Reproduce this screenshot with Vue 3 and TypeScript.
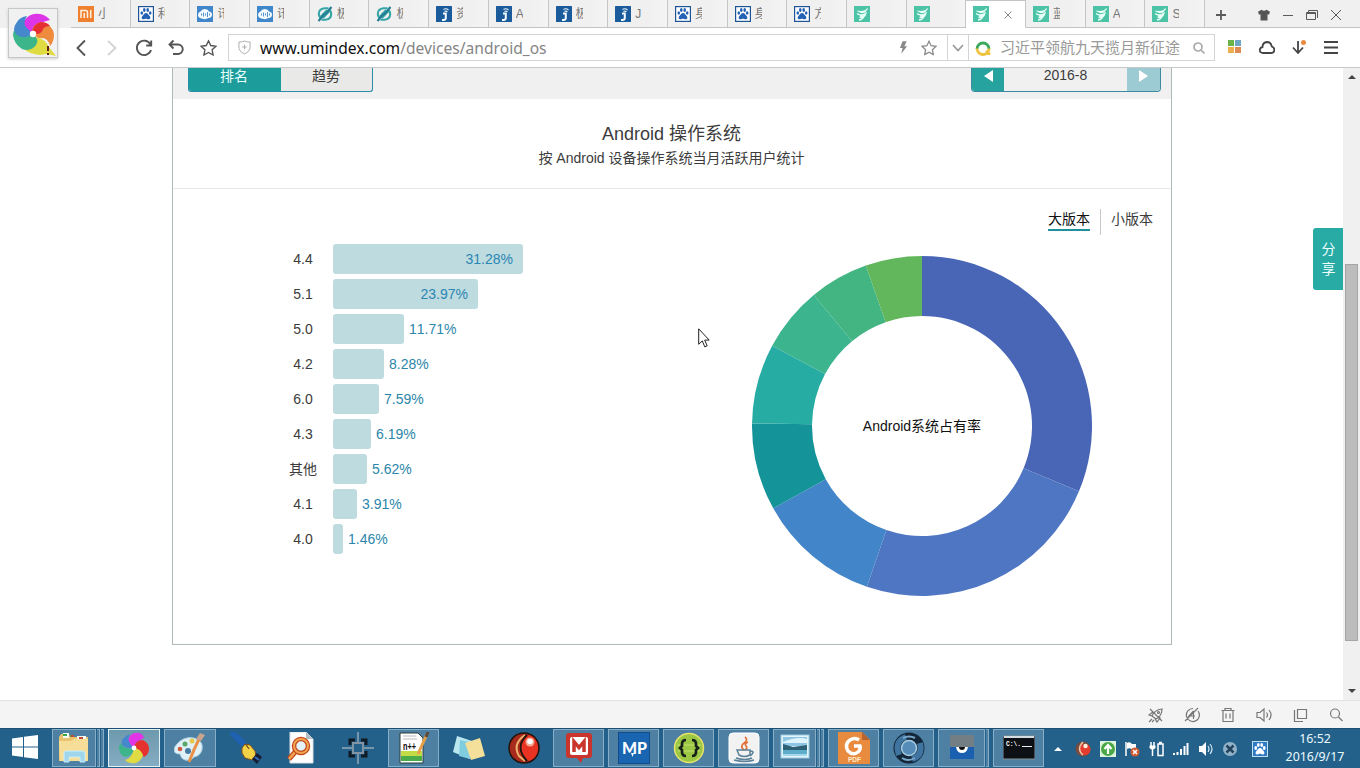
<script setup lang="ts">
interface Tab { icon: string; label: string; active?: boolean }
interface Bar { name: string; share: number; width: number; inside?: boolean }
interface Caption { text: string; x: number; y: number; size: number; length: number; color: string; family: string }
interface TaskItem { icon: string; width: number; state?: 'open' | 'active'; layers?: number; caption?: Caption }

const tabs: Tab[] = [
  { icon: 'mi', label: '小' },
  { icon: 'paw', label: '利' },
  { icon: 'voice', label: '讯' },
  { icon: 'voice', label: '讯' },
  { icon: 'loop', label: '极' },
  { icon: 'loop', label: '极' },
  { icon: 'jay', label: '资' },
  { icon: 'jay', label: 'A' },
  { icon: 'jay', label: '极' },
  { icon: 'jay', label: 'J' },
  { icon: 'paw', label: '身' },
  { icon: 'paw', label: '身' },
  { icon: 'paw', label: '方' },
  { icon: 'leaf', label: '' },
  { icon: 'leaf', label: '' },
  { icon: 'leaf', label: '', active: true },
  { icon: 'leaf', label: '蓝' },
  { icon: 'leaf', label: 'A' },
  { icon: 'leaf', label: 'S' },
]

const bars: Bar[] = [
  { name: '4.4', share: 31.28, width: 190, inside: true },
  { name: '5.1', share: 23.97, width: 145, inside: true },
  { name: '5.0', share: 11.71, width: 71 },
  { name: '4.2', share: 8.28, width: 51 },
  { name: '6.0', share: 7.59, width: 46 },
  { name: '4.3', share: 6.19, width: 38 },
  { name: '其他', share: 5.62, width: 34 },
  { name: '4.1', share: 3.91, width: 24 },
  { name: '4.0', share: 1.46, width: 10 },
]

const shares = [31.28, 23.97, 11.71, 8.28, 7.59, 6.19, 5.62, 5.36]
const colors = ['#4966b6', '#4f76c3', '#4385c9', '#149398', '#27aca4', '#3cb48e', '#42b583', '#62b65b']

function point(radius: number, pct: number): string {
  const a = (pct / 100) * Math.PI * 2
  return `${(170 + radius * Math.sin(a)).toFixed(2)} ${(170 - radius * Math.cos(a)).toFixed(2)}`
}

let total = 0
const slices = shares.map((share, i) => {
  const from = total
  total += share
  const to = total
  return {
    color: colors[i],
    d: `M${point(170, from)}A170 170 0 0 1 ${point(170, to)}L${point(110, to)}A110 110 0 0 0 ${point(110, from)}Z`,
  }
})

const tasks: TaskItem[] = [
  { icon: 'folder', width: 52, state: 'open', layers: 2 },
  { icon: 'swirl', width: 52, state: 'active' },
  { icon: 'palette', width: 52, state: 'open' },
  { icon: 'hand', width: 52 },
  { icon: 'search-doc', width: 51 },
  { icon: 'crosshair', width: 53 },
  { icon: 'notepad', width: 51, state: 'open', caption: { text: 'n++', x: 5, y: 18, size: 11, length: 13, color: '#111', family: 'sans' } },
  { icon: 'sticky', width: 51 },
  { icon: 'ball', width: 51 },
  { icon: 'emm', width: 51, state: 'open' },
  { icon: 'mp', width: 51, state: 'open', caption: { text: 'MP', x: 4, y: 21.5, size: 16, length: 25, color: '#fff', family: 'heavy' } },
  { icon: 'braces', width: 51, state: 'open' },
  { icon: 'java', width: 51, state: 'open' },
  { icon: 'picture', width: 51, state: 'open', layers: 2 },
  { icon: 'pdf', width: 51, state: 'open', caption: { text: 'PDF', x: 10, y: 29.5, size: 7.5, length: 13, color: '#fff0d2', family: 'sans' } },
  { icon: 'ring', width: 51, state: 'open' },
  { icon: 'eye', width: 51, state: 'open', layers: 1 },
  { icon: 'cmd', width: 51, state: 'open', caption: { text: 'C:\\.', x: 3, y: 14, size: 8, length: 15, color: '#fff', family: 'mono' } },
]

const tray = ['t-ball', 't-up', 't-flag', 't-power', 't-signal', 't-sound', 't-x']
const statusIcons = ['s-rocket', 's-speed', 's-trash', 's-sound', 's-window', 's-search']
</script>

<template>
  <div class="screen">
    <svg class="defs" aria-hidden="true">
      <symbol id="mi" viewBox="0 0 16 16"><rect width="16" height="16" fill="#ee8030" /><path d="M3 12V4.500h4.500q2 0 2 2V12M6.200 7v5M12.700 4v8" fill="none" stroke="#fff3e2" stroke-width="1.500" /></symbol>
      <symbol id="paw" viewBox="0 0 16 16"><rect x=".6" y=".6" width="14.800" height="14.800" fill="#fff" stroke="#1c5494" stroke-width="1.200" /><g fill="#2462b4"><ellipse cx="3.800" cy="7" rx="1.300" ry="1.800" /><ellipse cx="6.300" cy="4" rx="1.300" ry="1.900" /><ellipse cx="9.700" cy="4" rx="1.300" ry="1.900" /><ellipse cx="12.200" cy="7" rx="1.300" ry="1.800" /><path d="M8 7c2 0 2.300 2 3.600 3s1 3.300-.8 3.300S9 12.800 8 12.800s-1.300.5-2.900.5-2-2.300-.7-3.300S6.200 7 8 7z" /></g></symbol>
      <symbol id="t-paw" viewBox="0 0 16 16"><rect x=".5" y=".5" width="15" height="15" fill="#2f7ac2" stroke="#bfe0f5" /><g fill="#fff"><ellipse cx="3.800" cy="7" rx="1.400" ry="1.900" /><ellipse cx="6.300" cy="4" rx="1.400" ry="1.900" /><ellipse cx="9.700" cy="4" rx="1.400" ry="1.900" /><ellipse cx="12.200" cy="7" rx="1.400" ry="1.900" /><path d="M8 7c2 0 2.300 2 3.600 3s1 3.500-.8 3.500S9 12.800 8 12.800s-1.300.7-2.900.7-2-2.500-.7-3.500S6.200 7 8 7z" /></g></symbol>
      <symbol id="voice" viewBox="0 0 16 16"><rect width="16" height="16" fill="#3f86cb" /><path d="M4.500 12.500Q1 12 1 8.800q0-2.500 2.500-3.200Q5 2.800 8 3q3 0 4 2.500 3 .5 3 3.300 0 3-3.500 3.200L8 13.300z" fill="#f4fbff" /><path d="M4.500 7.500v2M6.500 6.500v4M8.500 7.500v2M10.500 6v5M12.500 7.500v2" stroke="#3f86cb" stroke-width=".9" /></symbol>
      <symbol id="loop" viewBox="0 0 16 16"><path d="M11.500 2.300H7.500Q1.800 3 1.800 8q0 2.200 1.300 3.500L10 4.300M4.500 13.700h4q5.700-.7 5.700-5.700 0-2.200-1.300-3.500L6 11.700" fill="none" stroke="#35a5a5" stroke-width="2.100" /><path d="M14.500 1 8 8.500M8 7.500 1.500 15" stroke="#247f96" stroke-width="2.200" /></symbol>
      <symbol id="jay" viewBox="0 0 16 16"><rect width="16" height="16" rx=".5" fill="#1c5b9b" /><path d="M7 7.500h2.800v4.300q0 2.200-2.300 2.200H6" fill="none" stroke="#f3faff" stroke-width="2" /><path d="M7.500 3.500q2.500-1.800 5 .5M8.500 5.500q1.500-1 3 .3" fill="none" stroke="#e4f1fa" stroke-width="1.100" /></symbol>
      <symbol id="leaf" viewBox="0 0 16 16"><rect width="16" height="16" fill="#4cc3a7" /><path d="M13.500 2.500Q12 6 5 5.500 8 7.500 12 5.500M3 7.500q4 3 9-.3Q11 11 6 9.700M5.500 11.500q4 0 6-2.500M5 14Q9.500 13.500 10.500 9" fill="none" stroke="#eafff8" stroke-width="1.300" /></symbol>

      <symbol id="swirl" viewBox="0 0 32 32">
        <path d="M16 16C11 16 7 11 12 4q3-4 9-3 4 1 5 5-3 1-5 3-4 1-5 7z" fill="#e233e6" />
        <path d="M16 16q1-8 9-8 6 3 6 9 0 5-5 8-2-3-5-4-3-1-5-5z" fill="#e5322e" />
        <path d="M16 16q7 1 9 7-1 5-7 8-7 1-11-3 4-1 6-4 2-3 3-8z" fill="#dfdb42" />
        <path d="M16 16q-1 8-9 9-5-2-6-8 0-4 2-6 2 5 6 5 4 1 7 0z" fill="#3cb58b" />
        <path d="M16 16q-7 1-11-2-4-5 3-10l4-2q-3 6 0 9 1 3 4 5z" fill="#4688cc" />
        <circle cx="16" cy="16" r="2.400" fill="#fff" />
      </symbol>
      <symbol id="logo" viewBox="0 0 44 44">
        <path d="M21 22Q9 21 12 9q6-9 16-7 6 1 10 6-8 2-11 4-5 3-6 10z" fill="#dd34e7" />
        <path d="M20 21q0-9 9-11 11 2 13 12 0 8-4 12-2-8-8-8-6 1-10-5z" fill="#ee8b3d" /><path d="M20 21q1-9 9-11 6 0 9 4-5 0-7 3-1 4-5 5z" fill="#e62f31" />
        <path d="M17 25q12 0 14 3 3 1 6 7l7 9-9-2-7 1q-10-1-15-5 6-3 4-13z" fill="#dfdb42" />
        <path d="M21 22q7 6 3 11-5 7-14 4-8-5-9-14 0-5 4-7 4 6 9 7z" fill="#3cb58b" />
        <path d="M21 22q-8 6-16 1-6-5 0-13 3-5 10-6-5 8 0 12z" fill="#4688cc" />
        <circle cx="21" cy="22" r="3.200" fill="#fff" /><path d="M36 34v5M36 41v2" stroke="#631f1b" stroke-width="2" />
      </symbol>
      <symbol id="folder" viewBox="0 0 32 32"><path d="M1 5 3 2h8l1 3h18v24H1z" fill="#e9c36f" /><path d="M5 1h6v5H5zM19 4h9v5h-9z" fill="#f8fbf5" /><path d="M5 3h4M12 4h3" stroke="#39a64e" stroke-width="2" /><path d="M13 4h3M21 6h4" stroke="#c34a3b" stroke-width="2" /><path d="M1 9h12l3-2h14v22H2z" fill="#f7de98" /><path d="M6 30v-9q0-2 2-2h17q2 0 2 2v9h-5v-5H11v5z" fill="#9fd6ec" stroke="#c9effb" /></symbol>
      <symbol id="palette" viewBox="0 0 32 32"><path d="M3 12Q10 4 20 6q10 3 8 12-2 6-8 7-3 4-9 3-4-1-5-6-6 0-6-4 0-3 3-6z" fill="#dff0f7" stroke="#a9cddf" /><circle cx="11" cy="12" r="2.500" fill="#58a869" /><circle cx="18" cy="9" r="2.500" fill="#e5c84a" /><circle cx="6" cy="17" r="2.300" fill="#d05a3d" /><circle cx="14" cy="19" r="3" fill="#457aa3" /><path d="M15 30Q20 17 25 7" stroke="#e99048" stroke-width="3" /><path d="m22 7 4-6 5 2-4 6z" fill="#c9a48b" /></symbol>
      <symbol id="hand" viewBox="0 0 32 32"><path d="m1 0 12 14M5 2l10 10" stroke="#1f61b3" stroke-width="4" /><path d="m12 16 3-4 4 5-3-5 4 1 5 6 1 5-4 4-7-2-3-5z" fill="#f2d348" stroke="#80501c" /><path d="m22 27 5-6 5 4-5 7z" fill="#171e33" /><path d="m25 25 4 3" stroke="#2d6fc0" stroke-width="2" /></symbol>
      <symbol id="search-doc" viewBox="0 0 32 32"><path d="M4 0h16l7 7v24H4z" fill="#fff" stroke="#d8dfe1" /><path d="M20 0v7h7z" fill="#b2bec5" /><path d="m3 27 7-8" stroke="#c4481d" stroke-width="5" /><path d="m3 27 7-8" stroke="#f1a451" stroke-width="2.500" /><circle cx="15" cy="14" r="7" fill="#e4f3fa" stroke="#c4481d" stroke-width="4.500" /><circle cx="15" cy="14" r="7" fill="none" stroke="#f1a451" stroke-width="2" /></symbol>
      <symbol id="crosshair" viewBox="0 0 32 32"><path d="M16 0v10M16 22v10M0 16h10M22 16h10" stroke="#93a8b8" stroke-width="1.500" /><rect x="11" y="11" width="10" height="10" fill="none" stroke="#8094a5" stroke-width="2" /><path d="M8 13V8h5M19 8h5v5M24 19v5h-5M13 24H8v-5" fill="none" stroke="#101b25" stroke-width="3" /></symbol>
      <symbol id="notepad" viewBox="0 0 32 32"><path d="M2 1h18l5 5v25H2z" fill="#fff" stroke="#293c36" /><path d="M3 19h21v6H3z" fill="#c3dc45" /><path d="M3 24h21v5H3z" fill="#4bab4a" /><path d="M5 4h13M5 7h14" stroke="#bbb" /><path d="m20 22 9-20" stroke="#e7a04a" stroke-width="3" /><path d="m28 5 2-5" stroke="#5c4a3c" stroke-width="3" /></symbol>
      <symbol id="sticky" viewBox="0 0 32 32"><path d="m4 4 18 6-5 17L0 20z" fill="#b9e7ef" /><path d="m7 8 14 3-4 16-11-3z" fill="#81cde0" /><path d="m12 11 15-5 5 18-14 4z" fill="#f4e09b" /></symbol>
      <symbol id="ball" viewBox="0 0 32 32"><circle cx="16" cy="16" r="15" fill="#a82a1c" stroke="#22130c" stroke-width="1.500" /><ellipse cx="20.500" cy="16" rx="9.500" ry="12.500" fill="#e93322" /><path d="M17 3Q4 12 11 24l6 5" fill="none" stroke="#ebb36d" stroke-width="2" /><path d="M19 3q-13 12 0 26" fill="none" stroke="#211510" stroke-width="2" /><circle cx="22" cy="10" r="4.500" fill="#f3a78f" /><circle cx="22" cy="9.500" r="2.800" fill="#fff" /></symbol>
      <symbol id="emm" viewBox="0 0 32 32"><path d="M6 1h20q3 0 3 3v19q0 3-3 3h-6l-2 5-4-5H6q-3 0-3-3V4q0-3 3-3z" fill="#c9342c" /><rect x="7" y="5" width="18" height="18" rx="2" fill="#fff" /><path d="M11 20V9.500l5 6 5-6V20" fill="none" stroke="#c9342c" stroke-width="3.500" /></symbol>
      <symbol id="mp" viewBox="0 0 32 32"><rect x=".5" y=".5" width="31" height="31" fill="#1965b1" stroke="#144b89" /><path d="m13 21 3 0-1.500 4z" fill="#fff" /></symbol>
      <symbol id="braces" viewBox="0 0 32 32"><circle cx="16" cy="16" r="14.500" fill="#9cc744" stroke="#e5e36c" stroke-width="1.500" /><path d="M4 13h24M5 19h22" stroke="#c8df70" /><path d="M13 8q-4 0-4 4v2l-2 2 2 2v2q0 4 4 4M19 8q4 0 4 4v2l2 2-2 2v2q0 4-4 4" fill="none" stroke="#162119" stroke-width="2.700" /></symbol>
      <symbol id="java" viewBox="0 0 32 32"><rect x="1" y="1" width="30" height="30" rx="4" fill="#f1f2f1" stroke="#fff" /><path d="M17 5q4 3-2 7-3 3 1 6M20 10q-4 2-2 4 2 2-1 4" fill="none" stroke="#df7138" stroke-width="1.700" /><path d="M9 18h13v5q-6 3-11 0zM22 19q6 0 0 5M8 26q9 3 16 0M6 28q11 3 20 0" fill="none" stroke="#5b8199" stroke-width="1.500" /></symbol>
      <symbol id="picture" viewBox="0 0 32 32"><rect x="2" y="3" width="28" height="23" fill="#e3f5fb" stroke="#9bcbe1" /><path d="M4 5h24v9H4z" fill="#8ec6e4" /><path d="M4 10q14-6 24-3v4H4z" fill="#dff4fb" /><path d="m4 12 10 3 14-2v6H4z" fill="#2d6176" /><path d="M4 18h24v6H4z" fill="#5daccb" /><path d="M4 22h24v2H4z" fill="#a5d8ea" /></symbol>
      <symbol id="pdf" viewBox="0 0 32 32"><path d="M0 0h24l8 8v24H0z" fill="#e98b3f" /><path d="M24 0v8h8z" fill="#b96330" /><path d="M21 8q-4-3-9 0-6 4-2 11 5 5 10 1 3-3 2-6h-6" fill="none" stroke="#fff" stroke-width="3.500" /></symbol>
      <symbol id="ring" viewBox="0 0 32 32"><circle cx="16" cy="16" r="11.500" fill="#5e94be" stroke="#14273a" stroke-width="8" /><path d="M6 23Q1 9 13 5M19 27Q30 24 27 11" fill="none" stroke="#3f74a0" stroke-width="6" /><path d="M10 6q6-3 12 0M9 26q6 4 13 0" fill="none" stroke="#7ba8c9" stroke-width="2" /><circle cx="16" cy="16" r="7.500" fill="#568db8" stroke="#a7cce0" stroke-width="1.500" /></symbol>
      <symbol id="eye" viewBox="0 0 32 32"><path d="M4 3h24v12H4z" fill="#727e83" /><path d="M4 15h24v12H4z" fill="#1a5fb0" /><path d="M10 15h12q-1 6-6 6t-6-6z" fill="#fff" /><path d="M13 15h6q0 3-3 3t-3-3z" fill="#111" /></symbol>
      <symbol id="cmd" viewBox="0 0 32 32"><path d="M0 4h32v23H0z" fill="#0d1115" stroke="#879099" /><path d="M1 5h30" stroke="#d4dde1" stroke-width="2" /><path d="M19 14.500h10" stroke="#eee" /></symbol>

      <symbol id="t-ball" viewBox="0 0 16 16"><circle cx="8" cy="8" r="7.500" fill="#7a4a40" /><circle cx="10" cy="8.500" r="5.500" fill="#e33c2e" /><path d="M8 1Q1 8 8 14" fill="none" stroke="#f1c5a4" stroke-width="1.500" /><circle cx="10.500" cy="5" r="2.200" fill="#fff1e2" /></symbol>
      <symbol id="t-up" viewBox="0 0 16 16"><rect width="16" height="16" fill="#dff4dc" /><circle cx="8" cy="8" r="7" fill="#4aa746" /><path d="M8 13V5M4.500 8 8 4l3.500 4" fill="none" stroke="#fff" stroke-width="2.200" /></symbol>
      <symbol id="t-flag" viewBox="0 0 16 16"><path d="M2 1v14" stroke="#fff" stroke-width="1.500" /><path d="M3 2q3-2 5 1h4v6H9Q6 6 3 8z" fill="#fff" /><circle cx="11" cy="11" r="4.500" fill="#d45c35" /><path d="m9 9 4 4M13 9l-4 4" stroke="#fff" stroke-width="1.500" /></symbol>
      <symbol id="t-power" viewBox="0 0 16 16"><path d="M2 1v4M5 1v4M3.500 8v7M9 3h5v11.500H9zM10 1.500h3" fill="none" stroke="#fff" stroke-width="1.500" /><path d="M.5 4.500h6V7q-3 3-6 0z" fill="#fff" /></symbol>
      <symbol id="t-signal" viewBox="0 0 16 16"><path d="M1 14v-2M4.500 14v-3M8 14V8M11.500 14V5M14.500 14V2" stroke="#fff" stroke-width="2" /></symbol>
      <symbol id="t-sound" viewBox="0 0 16 16"><path d="M1 5h3l4-4v14l-4-4H1z" fill="#fff" /><path d="M10 5q2 3 0 6M12 3q4 5 0 10" fill="none" stroke="#d6e9f4" stroke-width="1.200" /></symbol>
      <symbol id="t-x" viewBox="0 0 16 16"><circle cx="8" cy="8" r="7" fill="#91b2c8" /><path d="m4.500 4.500 7 7m0-7-7 7" stroke="#24445b" stroke-width="2.500" /></symbol>

      <symbol id="s-rocket" viewBox="0 0 16 16"><path d="M4 9Q6 3 14 2q0 7-6 10zM4 9l-3-1 4-3 2 1M7 12l2 3 3-4-1-2M4 12l-3 3M6 13l-2 2M2 2l12 12" /><circle cx="10.500" cy="5.500" r="1" /></symbol>
      <symbol id="s-speed" viewBox="0 0 16 16"><path d="M14 4a6.500 6.500 0 1 1-5-2.500M1 14 14 1M9.500 4 5 9h6M9.500 4v8" /></symbol>
      <symbol id="s-trash" viewBox="0 0 16 16"><path d="M1.500 3.500h13M5 3.500v-2h6v2M3 4v10.500h10V4M6 6.500v5M10 6.500v5" /></symbol>
      <symbol id="s-sound" viewBox="0 0 16 16"><path d="M1 5.500h3L8 2v12l-4-3.500H1zM10.500 5.500q2 2.500 0 5M13 3q4 5 0 10" /></symbol>
      <symbol id="s-window" viewBox="0 0 16 16"><path d="M5.500 2.500h9v9h-9zM2.500 3v11.500H11" /></symbol>
      <symbol id="s-search" viewBox="0 0 16 16"><circle cx="7" cy="6.500" r="4.500" /><path d="m10.500 10 4 4" /></symbol>
      <symbol id="star" viewBox="0 0 16 16"><path d="m8 1.200 2.100 4.500 4.900.6-3.600 3.400.9 4.900L8 12.200l-4.300 2.400.9-4.900L1 6.300l4.900-.6z" /></symbol>
    </svg>

    <header class="tabstrip">
      <div v-for="(tab, i) in tabs" :key="i" class="tab" :class="{ active: tab.active }">
        <svg class="favicon"><use :href="'#' + tab.icon" /></svg>
        <span v-if="tab.active" class="close"><svg viewBox="0 0 8 8"><path d="m.5.5 7 7m0-7-7 7" /></svg></span>
        <span v-else class="tab-label">{{ tab.label }}</span>
      </div>
      <div class="window-tools">
        <svg class="plus" viewBox="0 0 12 12"><path d="M6 1v10M1 6h10" stroke-width="1.800" /></svg>
        <svg class="shirt" viewBox="0 0 12 12"><path d="M3.500.8 0 2.800l1 3 1.500-.5V11.500h7V5.300l1.500.5 1-3-3.500-2Q6 2.800 3.500.8z" fill="#555" stroke="none" /></svg>
        <svg viewBox="0 0 12 12"><path d="M1 6.500h10" /></svg>
        <svg viewBox="0 0 12 12"><path d="M.5 3.500h9v7h-9zM2.500 3V1.500h9V9M.5 4.500h9" /></svg>
        <svg viewBox="0 0 12 12"><path d="m1 1 10 10m0-10L1 11" /></svg>
      </div>
    </header>

    <div class="app-logo"><svg><use href="#logo" /></svg></div>

    <nav class="toolbar">
      <div class="nav-buttons">
        <svg viewBox="0 0 18 18"><path d="M13 1.500 5.500 9l7.500 7.500" /></svg>
        <svg viewBox="0 0 18 18" class="disabled"><path d="m5 2 7.500 7L5 16" /></svg>
        <svg viewBox="0 0 18 18"><path d="M15.500 5.500A7.200 7.200 0 1 0 16 11M16.200 1.500v5h-5" /></svg>
        <svg viewBox="0 0 18 18"><path d="M2.500 5.500H11a4.700 4.700 0 0 1 0 9.500H6M6.500 1.500l-4 4 4 4" /></svg>
        <svg viewBox="0 0 16 16" class="thin"><use href="#star" /></svg>
      </div>
      <div class="fields">
        <div class="address">
          <svg class="shield" viewBox="0 0 14 16"><path d="M7 1q3 1.500 6 1v7q-1 4-6 6-5-2-6-6V2q3 .5 6-1zM4.500 7.500h5M7 5v5" /></svg>
          <span class="url"><b>www.umindex.com</b>/devices/android_os</span>
          <svg class="bolt" viewBox="0 0 10 14"><path d="M4 0 1 7.500h3L2.500 14 9 5.500H6L8.500 0z" /></svg>
          <svg class="fav"><use href="#star" /></svg>
        </div>
        <div class="drop"><svg viewBox="0 0 12 8"><path d="m1 1 5 5.500L11 1" /></svg></div>
        <div class="search">
          <svg class="engine" viewBox="0 0 16 16"><path d="M2 9A6 6 0 1 1 14 9" stroke="#39a85c" stroke-width="2.800" fill="none" /><path d="M2 8.500A6 6 0 0 0 14 8.500M11 11l4 3.500" stroke="#edc43f" stroke-width="2.800" fill="none" /></svg>
          <span class="query">习近平领航九天揽月新征途</span>
          <svg class="glass" viewBox="0 0 12 12"><circle cx="5" cy="5" r="4" /><path d="m8 8 3.500 3.500" /></svg>
        </div>
      </div>
      <div class="extras">
        <svg viewBox="0 0 16 16"><path d="M1 0h6v6H1z" fill="#69b348" /><path d="M8 0h6v6H8z" fill="#6ea5c3" /><path d="M1 7h6v6H1z" fill="#edae4d" /><path d="M8 7h6v6H8z" fill="#db8d53" /></svg>
        <svg viewBox="0 0 16 16" class="line"><path d="M4 13q-3.200 0-3.200-3 0-2.500 2.700-3Q3.500 2.500 8 2q4 0 4.800 4.500 2.500.8 2.500 3.200 0 3.300-3.500 3.300z" /></svg>
        <svg viewBox="0 0 16 16" class="line"><path d="M7 1v12M2 7.500l5 5.500 5-5.500" /><circle cx="12.500" cy="2.500" r="2.500" fill="#ea8b43" stroke="none" /></svg>
        <svg viewBox="0 0 16 16" class="line"><path d="M1 2h14M1 7.500h14M1 13h14" /></svg>
      </div>
    </nav>

    <div class="viewport">
      <main class="page">
        <section class="panel">
          <div class="filters">
            <div class="segment"><span class="on">排名</span><span>趋势</span></div>
            <div class="month">
              <span class="step"><svg viewBox="0 0 9 12"><path d="M9 0v12L0 6z" /></svg></span>
              <span class="value">2016-8</span>
              <span class="step off"><svg viewBox="0 0 9 12"><path d="M0 0v12l9-6z" /></svg></span>
            </div>
          </div>
          <div class="heading">
            <h1>Android 操作系统</h1>
            <p>按 Android 设备操作系统当月活跃用户统计</p>
          </div>
          <div class="versions"><span class="current">大版本</span><i></i><span>小版本</span></div>
          <div class="charts">
            <div class="bars">
              <div v-for="bar in bars" :key="bar.name" class="bar-row">
                <span class="bar-name">{{ bar.name }}</span>
                <div class="bar" :style="{ width: bar.width + 'px' }"><span v-if="bar.inside">{{ bar.share }}%</span></div>
                <span v-if="!bar.inside" class="bar-value">{{ bar.share }}%</span>
              </div>
            </div>
            <div class="donut">
              <svg viewBox="0 0 340 340"><path v-for="s in slices" :key="s.color" :d="s.d" :fill="s.color" /></svg>
              <span>Android系统占有率</span>
            </div>
          </div>
        </section>
        <div class="share">分<br>享</div>
        <svg class="cursor" viewBox="0 0 12 20"><path d="M.7.8v15.500l3.600-3.400 2.500 6 2.400-1-2.500-5.800h4.500z" fill="#fff" stroke="#222" /></svg>
      </main>
      <aside class="scrollbar">
        <svg viewBox="0 0 8 4"><path d="m0 4 4-4 4 4z" /></svg>
        <div class="thumb"></div>
        <svg viewBox="0 0 8 4"><path d="m0 0 4 4 4-4z" /></svg>
      </aside>
    </div>

    <div class="statusbar"><svg v-for="s in statusIcons" :key="s"><use :href="'#' + s" /></svg></div>

    <footer class="taskbar">
      <div class="start"><svg viewBox="0 0 26 26"><path d="M0 4.500 11 3v9.500H0zM12 2.800 26 1v11.500H12zM0 13.500h11V23L0 21.500zM12 13.500h14V25l-14-1.800z" /></svg></div>
      <div class="tasks">
        <div v-for="t in tasks" :key="t.icon" class="slot" :style="{ width: t.width + 'px' }">
          <div class="task" :class="t.state">
            <svg viewBox="0 0 32 32">
              <use :href="'#' + t.icon" />
              <text v-if="t.caption" :class="t.caption.family" :x="t.caption.x" :y="t.caption.y" :font-size="t.caption.size" :textLength="t.caption.length" lengthAdjust="spacingAndGlyphs" :fill="t.caption.color">{{ t.caption.text }}</text>
            </svg>
          </div>
          <div v-for="n in (t.layers ?? 0)" :key="n" class="layer"></div>
        </div>
      </div>
      <div class="tray">
        <svg class="more" viewBox="0 0 8 4"><path d="m0 4 4-4 4 4z" /></svg>
        <svg v-for="t in tray" :key="t"><use :href="'#' + t" /></svg>
        <svg class="ime"><use href="#t-paw" /></svg>
      </div>
      <div class="clock"><span>16:52</span><span>2016/9/17</span></div>
    </footer>
  </div>
</template>

<style>
html, body { margin: 0; overflow: hidden; }
</style>

<style scoped>
.screen { position: relative; display: flex; flex-direction: column; width: 1360px; height: 768px; overflow: hidden; background: #fff; color: #3c3c3c; font: 14px "Liberation Sans", "Noto Sans CJK SC", sans-serif; font-kerning: none; }
.screen * { box-sizing: border-box; }
.defs { position: absolute; width: 0; height: 0; }
svg { display: block; flex: none; }

.tabstrip { display: flex; flex: none; height: 28px; padding-left: 71px; background: #f0f0f0; }
.tab { display: flex; flex: none; align-items: center; width: 59.7px; padding: 0 0 0 7px; border-right: 1px solid #c6c6c6; border-bottom: 1px solid #c2c5c5; background: linear-gradient(90deg, #f0f0f0 70%, #f4f4f4); }
.tab.active { background: #fff; border-bottom-color: #fff; border-top: 1px solid #c2c5c5; }
.favicon { width: 16px; height: 16px; }
.tab-label { width: 7px; margin-left: 4px; padding-top: 1px; overflow: hidden; color: #777; font-size: 12px; line-height: 18px; white-space: nowrap; }
.close { margin-left: 15px; padding-top: 2px; }
.close svg { width: 8px; height: 8px; fill: none; stroke: #888; }
.window-tools { display: flex; flex: 1; align-items: center; padding: 2px 0 0 10px; border-bottom: 1px solid #c2c5c5; }
.window-tools svg { width: 12px; height: 12px; margin-right: 12px; fill: none; stroke: #5a5a5a; }
.window-tools .plus { margin-right: 31px; }
.app-logo { position: absolute; left: 8px; top: 8px; z-index: 2; display: flex; width: 50px; height: 50px; padding: 3px; background: #f1f1f1; border: 1px solid #c5c8c9; box-shadow: 0 1px 3px #ccc; }
.app-logo svg { width: 44px; height: 44px; }

.toolbar { display: flex; flex: none; align-items: center; height: 40px; padding-left: 72px; border-bottom: 1px solid #c6c9c9; background: #fff; }
.nav-buttons { display: flex; width: 156px; gap: 14px; }
.nav-buttons svg { width: 18px; height: 18px; fill: none; stroke: #555; stroke-width: 1.9; }
.nav-buttons .disabled { margin-left: -1px; stroke: #d4d4d4; }
.nav-buttons .thin { width: 17px; margin-left: 1px; stroke-width: 1.3; }
.fields { display: flex; width: 987px; height: 27px; border: 1px solid #d2d5d5; }
.address { display: flex; align-items: center; width: 719px; padding: 0 9px; border-right: 1px solid #d2d5d5; }
.shield { width: 13px; height: 15px; fill: none; stroke: #aaa; }
.url { flex: 1; margin-left: 9px; color: #858585; font: 15.6px/24px "Noto Sans", "Open Sans", sans-serif; white-space: nowrap; }
.url b { color: #111; font-weight: 400; }
.bolt { width: 9px; height: 13px; fill: #888; }
.fav { width: 16px; height: 16px; margin: 0 1px 0 13px; fill: none; stroke: #888; stroke-width: 1.2; }
.drop { display: flex; align-items: center; justify-content: center; width: 21px; border-right: 1px solid #d2d5d5; }
.drop svg { width: 12px; height: 8px; fill: none; stroke: #999; stroke-width: 1.7; }
.search { display: flex; flex: 1; align-items: center; padding: 0 9px 0 6px; }
.engine { width: 16px; height: 16px; }
.query { flex: 1; margin: -2px 0 0 9px; color: #999; font: 15px/24px "Noto Sans CJK SC", sans-serif; white-space: nowrap; }
.glass { width: 12px; height: 12px; fill: none; stroke: #aaa; stroke-width: 1.7; }
.extras { display: flex; gap: 16px; padding: 0 0 0 12px; }
.extras svg { width: 16px; height: 16px; }
.extras .line { fill: none; stroke: #444; stroke-width: 1.8; }

.viewport { display: flex; flex: none; height: 632px; }
.page { position: relative; width: 1343px; }
.panel { display: flex; flex-direction: column; width: 1000px; height: 577px; margin-left: 172px; border: 1px solid #aebabb; border-top: 0; }
.filters { display: flex; justify-content: space-between; height: 31px; padding: 0 10px 0 15px; background: #f0f0f0; }
.segment { display: flex; width: 185px; height: 24px; overflow: hidden; border: 1px solid #2d8da6; border-top: 0; border-radius: 0 0 3px 3px; background: #e9e9e7; }
.segment span { flex: 1; padding-right: 1px; text-align: center; line-height: 16px; }
.segment .on { flex: 0 0 92px; padding-right: 2px; background: #1c9c9a; color: #e6ffff; }
.month { display: flex; width: 190px; height: 24px; overflow: hidden; border: 1px solid #3c8aa2; border-top: 0; border-radius: 0 0 4px 4px; }
.step { display: flex; width: 32px; padding-top: 2px; justify-content: center; background: #27a39f; }
.step svg { width: 9px; height: 12px; fill: #fff; }
.step.off { width: 33px; background: #9dcbd4; }
.value { flex: 1; text-align: center; line-height: 15px; }
.heading { height: 90px; padding: 22px 1px 0 0; border-bottom: 1px solid #e7eaea; text-align: center; }
.heading h1 { margin: 0; font-size: 18px; font-weight: 400; line-height: 27px; }
.heading p { margin: 0; line-height: 20px; }
.versions { display: flex; justify-content: flex-end; height: 47px; padding: 20px 18px 0 0; }
.versions span { height: 22px; line-height: 20px; }
.versions .current { border-bottom: 2px solid #218f9d; color: #111; }
.versions i { width: 1px; height: 26px; margin: 0 10px; background: #c4c9c9; }
.charts { display: flex; padding-top: 8px; }
.bars { display: flex; flex-direction: column; gap: 5px; width: 579px; padding-left: 100px; }
.bar-row { display: flex; align-items: center; height: 30px; }
.bar-name { width: 60px; line-height: 18px; text-align: center; }
.bar { display: flex; align-items: center; justify-content: flex-end; height: 30px; padding-right: 10px; border-radius: 3px; background: #bedbe0; color: #2b86b1; }
.bar-value { margin-left: 5px; color: #2b86a9; }
.donut { position: relative; width: 340px; height: 340px; margin-top: 12px; }
.donut svg { width: 340px; height: 340px; }
.donut span { position: absolute; inset: -2px 0 0; display: flex; align-items: center; justify-content: center; color: #111; }
.share { position: absolute; right: 0; top: 160px; width: 30px; height: 62px; padding: 11px 0 0 1px; border-radius: 3px 0 0 3px; background: #28aaa5; color: #efffff; line-height: 20px; text-align: center; }
.cursor { position: absolute; left: 698px; top: 260px; width: 12px; height: 20px; }
.scrollbar { display: flex; flex-direction: column; align-items: center; width: 17px; padding: 7px 0; background: #f0f0f0; }
.scrollbar svg { width: 8px; height: 4px; fill: #444; }
.thumb { width: 13px; height: 377px; margin: 185px 0 48px; border: 1px solid #a5a5a5; background: #bcbcbc; }

.statusbar { display: flex; flex: none; justify-content: flex-end; align-items: center; gap: 20px; height: 28px; padding: 1px 16px 0; border-top: 1px solid #e2e4e4; background: #f4f4f4; }
.statusbar svg { width: 16px; height: 16px; fill: none; stroke: #777; stroke-width: 1.2; }

.taskbar { display: flex; flex: none; height: 40px; border-top: 1px solid #1c4f73; background: #24618a; }
.start { display: flex; width: 52px; padding: 5px 0 0 12px; }
.start svg { width: 26px; height: 26px; fill: #fff; }
.tasks { display: flex; gap: 4px; }
.slot { display: flex; height: 38px; gap: 1px; }
.task { display: flex; flex: 1; align-items: center; justify-content: center; border: 1px solid transparent; }
.task svg { width: 32px; height: 32px; }
.task.open { border-color: #86aec7; background: #4d80a3; }
.task.active { border-color: #e1f3f7; background: linear-gradient(#6d99ad, #85acc2); }
.task .sans { font-family: "Liberation Sans", sans-serif; font-weight: 700; }
.task .mono { font-family: "Liberation Mono", monospace; font-weight: 700; }
.task .heavy { font-family: Lato, sans-serif; font-weight: 900; }
.layer { width: 3px; border: 1px solid #86aec7; border-left: 0; background: #4d80a3; }
.tray { display: flex; align-items: center; width: 226px; padding-left: 10px; }
.tray svg { width: 16px; height: 16px; margin-right: 8.5px; }
.tray .more { width: 8px; height: 4px; margin-right: 13px; fill: #fff; }
.tray .ime { margin: 0 0 0 5px; }
.clock { display: flex; flex-direction: column; width: 90px; padding-top: 1px; color: #eafaff; font: 12.4px/18px "Noto Sans", sans-serif; text-align: center; }
</style>
